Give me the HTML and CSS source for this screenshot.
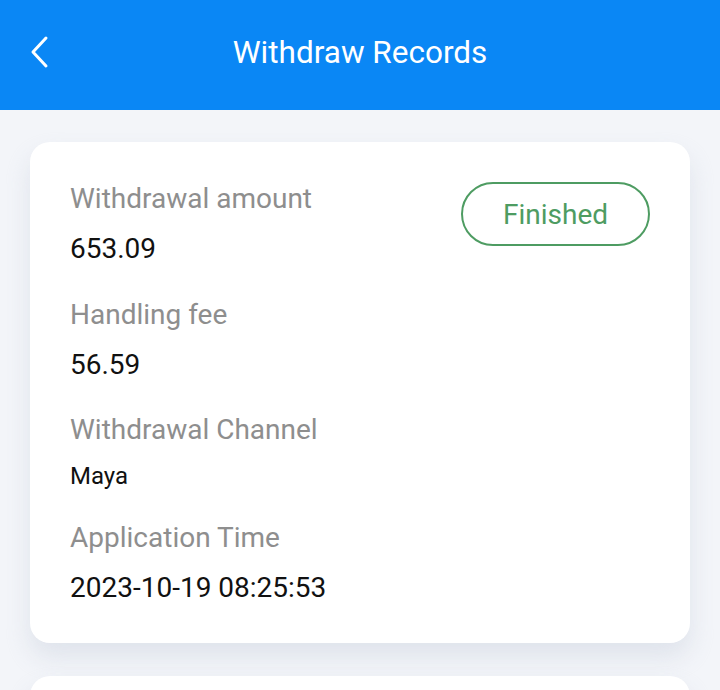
FILE: index.html
```html
<!DOCTYPE html>
<html lang="en">
<head>
    <meta charset="UTF-8">
    <meta name="viewport" content="width=device-width, initial-scale=1.0">
    <title>Withdraw Records</title>
    <link rel="stylesheet" href="styles.css">
</head>
<body>
    <header class="top-bar">
        <a class="back-btn" href="#">
            <svg width="22" height="34" viewBox="0 0 22 34" fill="none">
                <path d="M18 3 L5 17 L18 31" stroke="#fff" stroke-width="3" stroke-linecap="round" stroke-linejoin="round"/>
            </svg>
        </a>
        <h1>Withdraw Records</h1>
    </header>

    <main class="records">
        <div class="record-card">
            <span class="status-badge">Finished</span>
            <div class="field">
                <div class="field-label">Withdrawal amount</div>
                <div class="field-value">653.09</div>
            </div>
            <div class="field">
                <div class="field-label">Handling fee</div>
                <div class="field-value">56.59</div>
            </div>
            <div class="field">
                <div class="field-label">Withdrawal Channel</div>
                <div class="field-value small">Maya</div>
            </div>
            <div class="field">
                <div class="field-label">Application Time</div>
                <div class="field-value">2023-10-19 08:25:53</div>
            </div>
        </div>
        <div class="record-card"></div>
    </main>
</body>
</html>
```

FILE: styles.css
```css
body {
    margin: 0;
    font-family: Roboto, "Noto Sans", Arial, sans-serif;
    background-color: #f3f5f9;
}

.top-bar {
    height: 110px;
    background-color: #0a87f5;
    display: flex;
    align-items: center;
    justify-content: center;
    position: relative;
    padding-bottom: 6px;
    box-sizing: border-box;
}
.top-bar h1 {
    margin: 0;
    color: #fff;
    font-size: 31.5px;
    font-weight: 400;
}
.back-btn {
    position: absolute;
    left: 28px;
    top: 35px;
    display: flex;
}

.records {
    padding: 32px 30px 0;
    display: flex;
    flex-direction: column;
    gap: 33px;
}
.record-card {
    background-color: white;
    border-radius: 20px;
    padding: 37px 40px 35px 40px;
    position: relative;
    box-shadow: 0 14px 24px rgba(200, 206, 220, 0.45);
    min-height: 60px;
}

.status-badge {
    position: absolute;
    top: 40px;
    right: 40px;
    width: 189px;
    height: 64px;
    box-sizing: border-box;
    border: 2px solid #4e9c62;
    border-radius: 32px;
    color: #4e9c62;
    font-size: 28px;
    display: flex;
    align-items: center;
    justify-content: center;
}

.field {
    margin-bottom: 25.5px;
}
.field:last-child {
    margin-bottom: 0;
}
.field-label {
    color: #8e8e8e;
    font-size: 28px;
    line-height: 40px;
    margin-bottom: 10px;
}
.field-value {
    color: #111;
    font-size: 28px;
    line-height: 40px;
}
.field-value.small {
    font-size: 24px;
    line-height: 32px;
    margin-top: 4px;
}
```
